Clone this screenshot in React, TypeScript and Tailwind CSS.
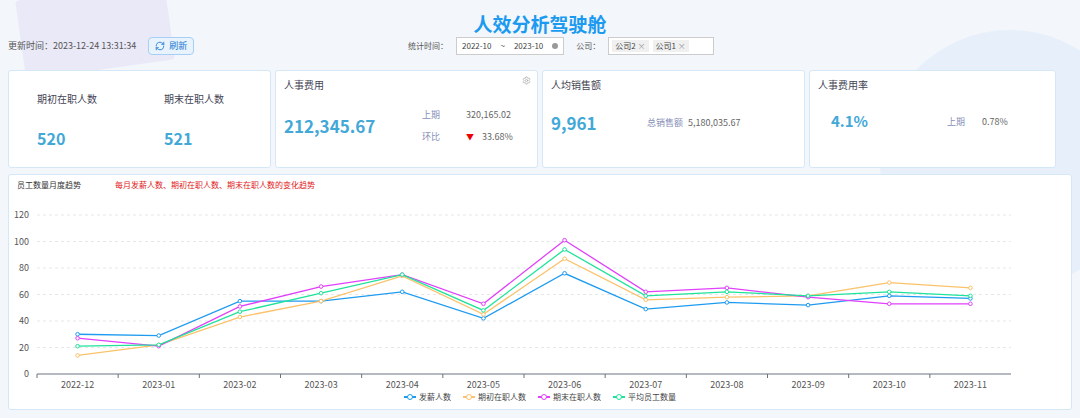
import { RefreshCw, Settings } from 'lucide-react';

const months = ['2022-12', '2023-01', '2023-02', '2023-03', '2023-04', '2023-05', '2023-06', '2023-07', '2023-08', '2023-09', '2023-10', '2023-11'];

const series = [
  { name: '发薪人数', color: '#1e9bf0', data: [30, 29, 55, 55, 62, 42, 76, 49, 54, 52, 59, 57] },
  { name: '期初在职人数', color: '#fbc26a', data: [14, 22, 43, 55, 74, 45, 87, 56, 58, 59, 69, 65] },
  { name: '期末在职人数', color: '#e040fb', data: [27, 21, 51, 66, 75, 53, 101, 62, 65, 58, 53, 53] },
  { name: '平均员工数量', color: '#1ee39a', data: [21, 22, 47, 61, 75, 48, 94, 59, 62, 59, 62, 59] },
];

const font = { fontFamily: '"Noto Sans CJK SC", "Liberation Sans", sans-serif' };

function Chart() {
  const left = 28, right = 1002, top = 18, bottom = 177;
  const step = (right - left) / 12;
  const x = (i: number) => left + step * (i + 0.5);
  const y = (v: number) => bottom - (v / 120) * (bottom - top);
  return (
    <svg width="1064" height="196" className="block">
      {[0, 20, 40, 60, 80, 100, 120].map((v) => (
        <g key={v}>
          <line x1={left} x2={right} y1={y(v)} y2={y(v)} stroke={v === 0 ? '#6b7280' : '#e5e7eb'} strokeDasharray={v === 0 ? '' : '3 3'} />
          <text x={left - 8} y={y(v) + 3} fontSize="9" fill="#555" textAnchor="end">{v}</text>
        </g>
      ))}
      {months.map((m, i) => (
        <g key={m}>
          <line x1={left + step * i} x2={left + step * i} y1={bottom} y2={bottom + 4} stroke="#6b7280" />
          <text x={x(i)} y={bottom + 14} fontSize="9" fill="#555" textAnchor="middle">{m}</text>
        </g>
      ))}
      {series.map((s) => (
        <g key={s.name}>
          <polyline fill="none" stroke={s.color} strokeWidth="1.3" points={s.data.map((v, i) => `${x(i)},${y(v)}`).join(' ')} />
          {s.data.map((v, i) => (
            <circle key={i} cx={x(i)} cy={y(v)} r="1.8" fill="#fff" stroke={s.color} strokeWidth="1" />
          ))}
        </g>
      ))}
    </svg>
  );
}

export default function App() {
  return (
    <div className="w-[1080px] h-[418px] bg-[#f3f6fa] overflow-hidden relative text-[#333]" style={font}>
      <div className="absolute left-[20px] -top-[10px] w-[150px] h-[80px] bg-[#e6e4f7] opacity-70 rounded-sm rotate-[-8deg]" />
      <div className="absolute left-[880px] top-[30px] w-[260px] h-[260px] rounded-full bg-[#e3edfb] opacity-80" />
      <div className="relative">
        <div className="h-[70px] relative">
          <div className="absolute left-0 right-0 top-[10px] text-center text-[19px] font-bold text-[#1a9af0]">人效分析驾驶舱</div>
          <div className="absolute left-[8px] top-[37px] flex items-center gap-3 text-[9px] text-[#555]">
            <span>更新时间：2023-12-24 13:31:34</span>
            <span className="flex items-center gap-1 px-[6px] h-[18px] border border-[#a7cff5] bg-[#e8f3fd] text-[#1a77d0] rounded-sm">
              <RefreshCw className="w-[10px] h-[10px]" />刷新
            </span>
          </div>
          <div className="absolute left-[408px] top-[37px] flex items-center gap-2 text-[8px] text-[#555] leading-none">
            <span>统计时间：</span>
            <span className="flex items-center gap-[9px] h-[18px] px-[5px] border border-[#ccc] bg-white text-[#444]">
              2022-10 <span>~</span> 2023-10 <span className="w-[6px] h-[6px] rounded-full bg-[#999]" />
            </span>
            <span className="ml-[4px]">公司：</span>
            <span className="flex items-center gap-1 w-[106px] h-[18px] px-[3px] border border-[#ccc] bg-white text-[#444] whitespace-nowrap">
              <span className="bg-[#f0f0f0] px-[3px] py-[2px]">公司2 <span className="text-[#999]">×</span></span>
              <span className="bg-[#f0f0f0] px-[3px] py-[2px]">公司1 <span className="text-[#999]">×</span></span>
            </span>
          </div>
        </div>
        <div className="flex gap-[4px] px-[8px]">
          <div className="w-[263px] h-[98px] bg-white border border-[#d5e8f8] rounded-[3px] flex pl-[28px] pt-[20px]">
            <div className="w-[127px]">
              <div className="text-[10px] text-[#445]">期初在职人数</div>
              <div className="mt-[20px] text-[16px] font-bold text-[#42a8d8]">520</div>
            </div>
            <div>
              <div className="text-[10px] text-[#445]">期末在职人数</div>
              <div className="mt-[20px] text-[16px] font-bold text-[#42a8d8]">521</div>
            </div>
          </div>
          <div className="w-[263px] h-[98px] bg-white border border-[#d5e8f8] rounded-[3px] relative px-[8px] pt-[6px]">
            <Settings className="absolute right-[6px] top-[5px] w-[9px] h-[9px] text-[#aaa]" />
            <div className="text-[10px] text-[#445]">人事费用</div>
            <div className="flex items-center mt-[12px]">
              <div className="w-[138px] text-[17px] font-bold text-[#42a8d8]">212,345.67</div>
              <div className="text-[9px] leading-[22px]">
                <div className="flex"><span className="w-[44px] text-[#8890b8]">上期</span><span className="text-[#666]">320,165.02</span></div>
                <div className="flex"><span className="w-[44px] text-[#8890b8]">环比</span><span className="text-[#666]"><span className="text-[#e00] text-[8px] mr-[8px]">▼</span>33.68%</span></div>
              </div>
            </div>
          </div>
          <div className="w-[263px] h-[98px] bg-white border border-[#d5e8f8] rounded-[3px] px-[8px] pt-[6px]">
            <div className="text-[10px] text-[#445]">人均销售额</div>
            <div className="flex items-center mt-[18px]">
              <div className="w-[96px] text-[17px] font-bold text-[#42a8d8]">9,961</div>
              <div className="text-[9px]"><span className="text-[#8890b8] mr-[5px]">总销售额</span><span className="text-[#666]">5,180,035.67</span></div>
            </div>
          </div>
          <div className="w-[247px] h-[98px] bg-white border border-[#d5e8f8] rounded-[3px] px-[8px] pt-[6px]">
            <div className="text-[10px] text-[#445]">人事费用率</div>
            <div className="flex items-center mt-[18px] pl-[13px]">
              <div className="w-[116px] text-[15px] font-bold text-[#42a8d8]">4.1%</div>
              <div className="text-[9px]"><span className="text-[#8890b8] mr-[17px]">上期</span><span className="text-[#666]">0.78%</span></div>
            </div>
          </div>
        </div>
        <div className="mx-[8px] mt-[6px] h-[236px] bg-white border border-[#d5e8f8] rounded-[3px]">
          <div className="flex gap-[34px] pl-[8px] pt-[6px] h-[22px] text-[8px] leading-none">
            <span className="text-[#333]">员工数量月度趋势</span>
            <span className="text-[#e02020]">每月发薪人数、期初在职人数、期末在职人数的变化趋势</span>
          </div>
          <Chart />
          <div className="flex justify-center gap-[12px] text-[8px] leading-none text-[#444] whitespace-nowrap">
            {series.map((s) => (
              <span key={s.name} className="flex items-center gap-[3px]">
                <span className="relative w-[12px] h-[8px] flex items-center">
                  <span className="w-full h-[1.5px]" style={{ background: s.color }} />
                  <span className="absolute left-[3px] w-[6px] h-[6px] rounded-full bg-white border" style={{ borderColor: s.color }} />
                </span>
                {s.name}
              </span>
            ))}
          </div>
        </div>
      </div>
    </div>
  );
}
